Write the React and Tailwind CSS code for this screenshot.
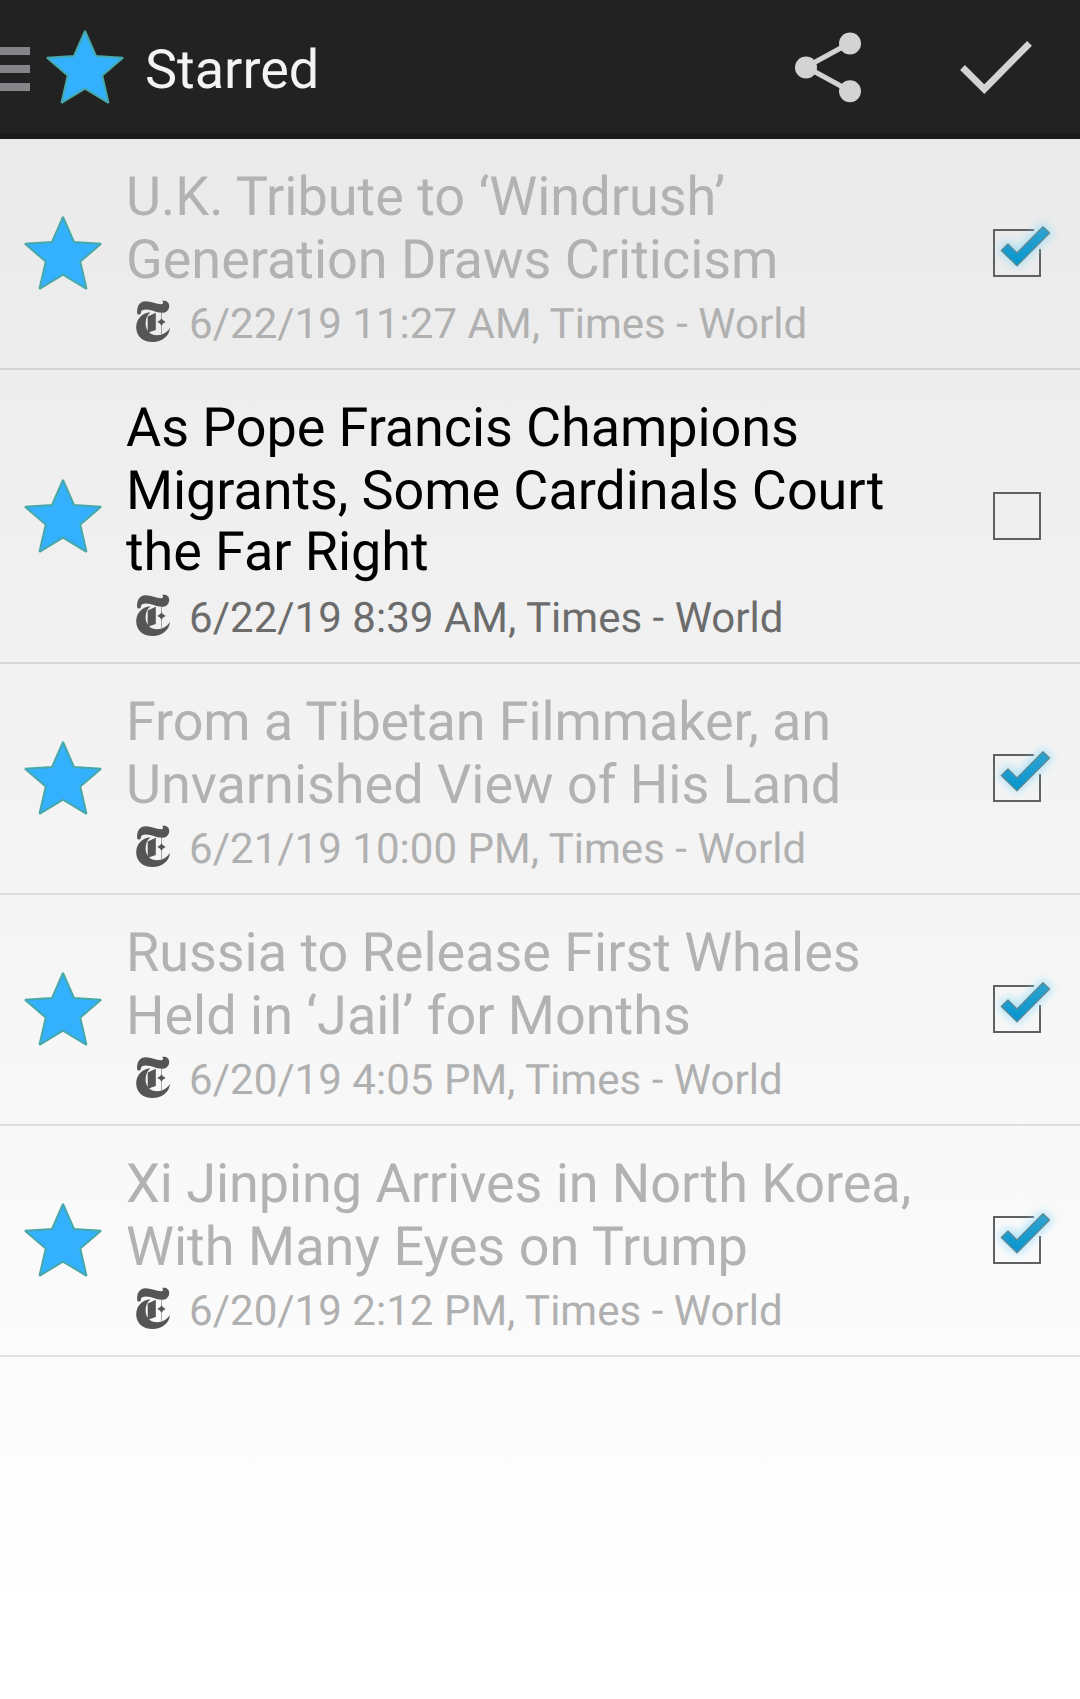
function Star() {
  return (
    <svg className="block h-[80px] w-[80px] shrink-0" viewBox="-1 -2 80 80">
      <polygon points="39,2 50,27 77,28.800 56.300,46.600 62.500,73.800 39,59.600 15.500,73.800 21.700,46.600 1,28.800 28,27" fill="#33b1ff" stroke="#48a8a8" strokeWidth="2" strokeLinejoin="miter" strokeMiterlimit="2" />
    </svg>
  );
}

function FeedIcon() {
  return (
    <svg className="block h-[42px] w-[34px] shrink-0" viewBox="0 0 34 42" fill="#555">
      <path d="M1.2 13.5C0.4 6 4 1.2 9.5 1.2c6 0 11 3 15.500 3 2.200 0 2.800-1.200 1.200-3.400C30 0.200 33.600 2 33.200 6.400c-.4 4.200-3.400 6.400-7.400 6.400-5.600 0-10.400-3.200-15.600-3.200-3.600 0-5.200 1-5.400 3.400-.2 1.600-2.800 2.400-3.600.5z" />
      <path d="M14.500 12.200C5.500 13 .2 19.500.2 27.200.2 36 6.600 42 16.600 42 26 42 33.300 36.500 34 27.800c-3.500 5.700-8.200 7.400-12.600 7.400-7.200 0-11.800-4.700-11.800-11.800 0-5 1.600-8.400 4.900-11.200z" />
      <path d="M11.700 16.500 19.800 12.800V30L11.700 32.800z" />
      <path d="M25.500 18.300q1 2.600 4.200 3.700-3.200 1.100-4.200 3.700-1-2.600-4.200-3.700 3.200-1.100 4.200-3.700z" />
      <path d="M25.200 12.500h.7V34h-.7z" opacity=".7" />
    </svg>
  );
}

function CheckBox({ checked }) {
  return (
    <svg className="block h-[90px] w-[96px] shrink-0" viewBox="0 0 96 90">
      <defs>
        <linearGradient id="tick" x1="0" y1="0" x2="0" y2="1">
          <stop offset="0" stopColor="#2fa3cf" />
          <stop offset="1" stopColor="#0596cf" />
        </linearGradient>
        <filter id="glow" x="-50%" y="-50%" width="200%" height="200%">
          <feGaussianBlur stdDeviation="5" />
        </filter>
      </defs>
      {checked ? (
        <>
          <path d="M50 24H10V70H56V43" fill="none" stroke="#606060" strokeWidth="2" />
          <path d="M17 44 24 37 33 46 59 20 66 27 33 59z" fill="#8fdcf8" stroke="#8fdcf8" strokeWidth="4" opacity=".8" filter="url(#glow)" />
          <path d="M17.300 44.500 24 38 33 47 59 20.800 65.500 27 33 59.700z" fill="url(#tick)" stroke="#5f8793" strokeWidth="1.300" strokeLinejoin="round" />
        </>
      ) : (
        <rect x="10" y="24" width="46" height="46" fill="none" stroke="#606060" strokeWidth="2" />
      )}
    </svg>
  );
}

const articles = [
  {
    lines: [["U.K. Tribute to ‘Windrush’", ""], ["Generation Draws Criticism", "tracking-[-0.03px]"]],
    meta: "6/22/19 11:27 AM, Times - World",
    read: true,
  },
  {
    lines: [["As Pope Francis Champions", "tracking-[-0.1px]"], ["Migrants, Some Cardinals Court", "tracking-[-0.1px]"], ["the Far Right", "-mt-[2px] mb-[2px] tracking-[-0.08px]"]],
    meta: "6/22/19 8:39 AM, Times - World",
    read: false,
  },
  {
    lines: [["From a Tibetan Filmmaker, an", "tracking-[-0.13px]"], ["Unvarnished View of His Land", "tracking-[-0.03px]"]],
    meta: "6/21/19 10:00 PM, Times - World",
    read: true,
  },
  {
    lines: [["Russia to Release First Whales", "tracking-[-0.04px]"], ["Held in ‘Jail’ for Months", "tracking-[-0.02px]"]],
    meta: "6/20/19 4:05 PM, Times - World",
    read: true,
  },
  {
    lines: [["Xi Jinping Arrives in North Korea,", "tracking-[-0.06px]"], ["With Many Eyes on Trump", "tracking-[0.03px]"]],
    meta: "6/20/19 2:12 PM, Times - World",
    read: true,
  },
];

function Article({ lines, meta, read }) {
  const tall = lines.length === 3;
  return (
    <li className={"flex items-center border-b-2 border-black/10 pl-[23px] " + (tall ? "h-[294px]" : "h-[231px]")}>
      <div className={tall ? "" : "pb-[1px]"}>
        <Star />
      </div>
      <div className="flex h-full grow flex-col pl-[23px] pt-[27px]">
        <h2 className={"text-[54px] leading-[63px] whitespace-nowrap " + (read ? "text-[#b2b2b2]" : "text-black")}>
          {lines.map(([text, fit]) => (
            <span key={text} className={"block " + fit}>{text}</span>
          ))}
        </h2>
        <div className="flex items-start pl-[10px] pt-[8px]">
          <FeedIcon />
          <p className={"pl-[19px] text-[42px] leading-[50px] tracking-[0.03px] whitespace-nowrap " + (read ? "text-[#b0b0b0]" : "text-[#6c6c6c]")}>{meta}</p>
        </div>
      </div>
      <div className={tall ? "pb-[4px]" : "pb-[6px]"}>
        <CheckBox checked={read} />
      </div>
    </li>
  );
}

export default function App() {
  return (
    <div className="flex h-[1699px] w-[1080px] flex-col overflow-hidden bg-white font-['Roboto',sans-serif] [text-rendering:geometricPrecision]">
      <header className="flex h-[139px] shrink-0 items-center border-b-6 border-[#1a1a1a] bg-[#222]">
        <div className="flex w-[30px] flex-col gap-[10px] pt-[5px]">
          <span className="h-2 bg-[#858489]" />
          <span className="h-2 bg-[#858489]" />
          <span className="h-2 bg-[#858489]" />
        </div>
        <div className="pl-[15px]">
          <Star />
        </div>
        <h1 className="grow pl-[20px] pt-[7px] text-[54px] leading-[63px] text-[#f3f3f3]">Starred</h1>
        <svg className="h-[80px] w-[80px]" viewBox="0 0 80 80" fill="#d3d3d3">
          <path d="M60 16 16 40 60 64" fill="none" stroke="#d3d3d3" strokeWidth="5" />
          <circle cx="60" cy="16.500" r="11" />
          <circle cx="16" cy="40.500" r="11" />
          <circle cx="60" cy="64.300" r="11" />
        </svg>
        <svg className="mr-[40px] ml-[90px] h-[80px] w-[80px]" viewBox="0 0 80 80">
          <path d="M2.500 40.500 24.300 62.200 69.500 16.300" fill="none" stroke="#d3d3d3" strokeWidth="6.800" />
        </svg>
      </header>
      <ul className="grow bg-linear-to-b from-[#eaeaea] to-white to-95%">
        {articles.map((a) => (
          <Article key={a.meta} {...a} />
        ))}
      </ul>
    </div>
  );
}
